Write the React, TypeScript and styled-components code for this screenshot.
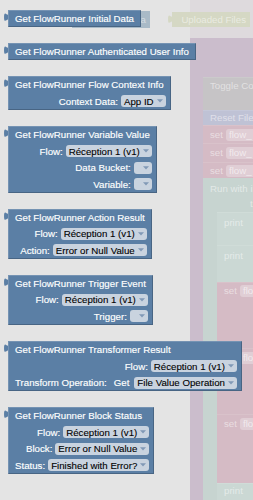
import React from 'react';
import styled, { createGlobalStyle } from 'styled-components';

const GlobalStyle = createGlobalStyle`
  html, body { margin: 0; padding: 0; }
  body {
    font-family: "Liberation Sans", Arial, sans-serif;
    background: #e4e4e4;
  }
`;

const BLOCK = '#5b7fa5';

const Stage = styled.div`
  position: relative;
  width: 253px;
  height: 500px;
  overflow: hidden;
  background: #e4e4e4;
`;

/* ---------- faded workspace behind the flyout ---------- */

const Canvas = styled.div`
  position: absolute;
  inset: 0;
`;

const WsColumn = styled.div`
  position: absolute;
  left: 190px;
  top: 0;
  width: 63px;
  height: 500px;
  display: grid;
  grid-template-rows: 38px 1fr;
`;

const WsTop = styled.div`
  background: #dedadd;
`;

const WsBody = styled.div`
  display: flex;
  flex-direction: column;
  padding: 39px 0 0 13px;
  background: #cbbdcc;
`;

const WsBlock = styled.div<{ $h?: number; $bg: string; $pl?: number; $pt?: number }>`
  display: flex;
  align-items: flex-start;
  gap: 3px;
  height: ${p => (p.$h ? `${p.$h}px` : 'auto')};
  padding: ${p => p.$pt ?? 2}px 0 0 ${p => p.$pl ?? 7}px;
  box-sizing: border-box;
  background: ${p => p.$bg};
  border-top: 1px solid rgba(255, 255, 255, 0.1);
  font-size: 9.7px;
  line-height: 12px;
  color: rgba(255, 255, 255, 0.5);
  white-space: nowrap;
`;

const RunBlock = styled.div`
  flex: 1;
  display: flex;
  flex-direction: column;
  padding-left: 14px;
  background: #c7d4d0;
`;

const RunHead = styled.div`
  display: flex;
  flex-direction: column;
  height: 34px;
  margin-left: -14px;
  padding: 3px 0 0 7px;
  box-sizing: border-box;
  font-size: 9.7px;
  line-height: 15px;
  color: rgba(255, 255, 255, 0.5);
  white-space: nowrap;
`;

const RunTail = styled.span`
  padding-left: 40px;
`;

const FadedField = styled.span`
  padding: 0 3px;
  border-radius: 3px;
  background: rgba(255, 255, 255, 0.28);
  color: rgba(255, 255, 255, 0.6);
`;

interface GhostProps {
  $x: number;
  $y: number;
  $w: number;
  $h: number;
  $bg: string;
}

const Ghost = styled.div<GhostProps>`
  position: absolute;
  left: ${p => p.$x}px;
  top: ${p => p.$y}px;
  width: ${p => p.$w}px;
  height: ${p => p.$h}px;
  display: flex;
  align-items: center;
  justify-content: flex-end;
  padding: 0 4px 0 6px;
  box-sizing: border-box;
  background: ${p => p.$bg};
  font-size: 9.7px;
  color: rgba(255, 255, 255, 0.5);
  white-space: nowrap;
`;

/* ---------- flyout blocks ---------- */

const Flyout = styled.div`
  position: relative;
  display: flex;
  flex-direction: column;
  align-items: flex-start;
  gap: 16.2px;
  padding: 10px 0 0 8px;
`;

const Block = styled.div`
  position: relative;
  display: flex;
  flex-direction: column;
  align-items: flex-end;
  padding: 0.25px 5px 0.25px 7px;
  background: ${BLOCK};
  box-shadow: inset 1px 1px 0 rgba(255, 255, 255, 0.16),
    inset -1px -1px 0 rgba(0, 0, 0, 0.2);
  color: #fff;
  font-size: 9.7px;
  -webkit-text-stroke: 0.15px currentColor;
`;

const Tab = styled.svg`
  position: absolute;
  left: -4.4px;
  top: 2.75px;
`;

const Row = styled.div<{ $title?: boolean }>`
  display: flex;
  align-items: center;
  gap: 3px;
  height: 16.5px;
  white-space: nowrap;
  align-self: ${p => (p.$title ? 'flex-start' : 'flex-end')};
  padding-right: ${p => (p.$title ? 2 : 0)}px;
`;

const Extra = styled.span`
  margin-left: 4px;
  margin-right: 2px;
`;

const Field = styled.span<{ $empty?: boolean }>`
  display: inline-flex;
  align-items: center;
  gap: 3px;
  height: 12px;
  padding: 0 3px 0 ${p => (p.$empty ? 9 : 3)}px;
  border-radius: 3px;
  background: #c9d3df;
  color: #000;
  -webkit-text-stroke: 0.1px currentColor;
`;

const Arrow = () => (
  <svg width="6" height="4" viewBox="0 0 6 4">
    <path d="M0 0.3 H6 L3 3.6 Z" fill="#8199b6" />
  </svg>
);

const OutputTab = ({ color }: { color: string }) => (
  <Tab width="4.5" height="8.3" viewBox="-8 0 8 15">
    <path d="M0,0 c0,10 -8,-8 -8,7.5 s8,-2.5 8,7.5 Z" fill={color} />
  </Tab>
);

interface IRow {
  label: string;
  field?: string;
  extra?: string;
}

interface IBlock {
  title: string;
  rows: IRow[];
}

const FLOW = 'Réception 1 (v1)';

const blocks: IBlock[] = [
  { title: 'Get FlowRunner Initial Data', rows: [] },
  { title: 'Get FlowRunner Authenticated User Info', rows: [] },
  {
    title: 'Get FlowRunner Flow Context Info',
    rows: [{ label: 'Context Data:', field: 'App ID' }],
  },
  {
    title: 'Get FlowRunner Variable Value',
    rows: [
      { label: 'Flow:', field: FLOW },
      { label: 'Data Bucket:', field: '' },
      { label: 'Variable:', field: '' },
    ],
  },
  {
    title: 'Get FlowRunner Action Result',
    rows: [
      { label: 'Flow:', field: FLOW },
      { label: 'Action:', field: 'Error or Null Value' },
    ],
  },
  {
    title: 'Get FlowRunner Trigger Event',
    rows: [
      { label: 'Flow:', field: FLOW },
      { label: 'Trigger:', field: '' },
    ],
  },
  {
    title: 'Get FlowRunner Transformer Result',
    rows: [
      { label: 'Flow:', field: FLOW },
      { label: 'Transform Operation:', extra: 'Get', field: 'File Value Operation' },
    ],
  },
  {
    title: 'Get FlowRunner Block Status',
    rows: [
      { label: 'Flow:', field: FLOW },
      { label: 'Block:', field: 'Error or Null Value' },
      { label: 'Status:', field: 'Finished with Error?' },
    ],
  },
];

const PINK = '#d5bbc5';
const GREEN = '#cbd8d4';

const Workspace = () => (
  <Canvas>
    <WsColumn>
      <WsTop />
      <WsBody>
        <WsBlock $h={33} $bg="#c6c4c6">Toggle Co</WsBlock>
        <WsBlock $h={15} $bg="#bfc2d5" $pt={1}>Reset File</WsBlock>
        <WsBlock $h={18} $bg={PINK} $pt={3}>set <FadedField>flow_</FadedField></WsBlock>
        <WsBlock $h={19} $bg={PINK} $pt={3}>set <FadedField>flow_</FadedField></WsBlock>
        <WsBlock $h={16} $bg={PINK}>set <FadedField>flow_</FadedField></WsBlock>
        <RunBlock>
          <RunHead>
            <span>Run with i</span>
            <RunTail>t</RunTail>
          </RunHead>
          <WsBlock $h={33} $bg={GREEN} $pt={4}>print</WsBlock>
          <WsBlock $h={37} $bg={GREEN} $pt={4}>print</WsBlock>
          <WsBlock $h={66} $bg={PINK}>set <FadedField>flo</FadedField></WsBlock>
          <WsBlock $h={66} $bg={PINK} $pl={23} $pt={3}><FadedField>flo</FadedField></WsBlock>
          <WsBlock $h={69} $bg={PINK} $pt={3}>set <FadedField>flo</FadedField></WsBlock>
          <WsBlock $bg={GREEN} $h={17} $pt={1}>print</WsBlock>
        </RunBlock>
      </WsBody>
    </WsColumn>
    {/* ghost of a dragged block and the "Uploaded Files" block */}
    <Ghost $x={72} $y={11} $w={78} $h={17} $bg="#a9bac7">a</Ghost>
    <Ghost $x={172} $y={12} $w={78} $h={15} $bg="#d5d8c4">
      <Tab width="4.5" height="8.3" viewBox="-8 0 8 15">
        <path d="M0,0 c0,10 -8,-8 -8,7.5 s8,-2.5 8,7.5 Z" fill="#d5d8c4" />
      </Tab>
      Uploaded Files
    </Ghost>
  </Canvas>
);

export default function App() {
  return (
    <Stage>
      <GlobalStyle />
      <Workspace />
      <Flyout>
        {blocks.map(b => (
          <Block key={b.title}>
            <OutputTab color={BLOCK} />
            <Row $title>{b.title}</Row>
            {b.rows.map(r => (
              <Row key={r.label}>
                <span>{r.label}</span>
                {r.extra && <Extra>{r.extra}</Extra>}
                <Field $empty={!r.field}>
                  {r.field}
                  <Arrow />
                </Field>
              </Row>
            ))}
          </Block>
        ))}
      </Flyout>
    </Stage>
  );
}
